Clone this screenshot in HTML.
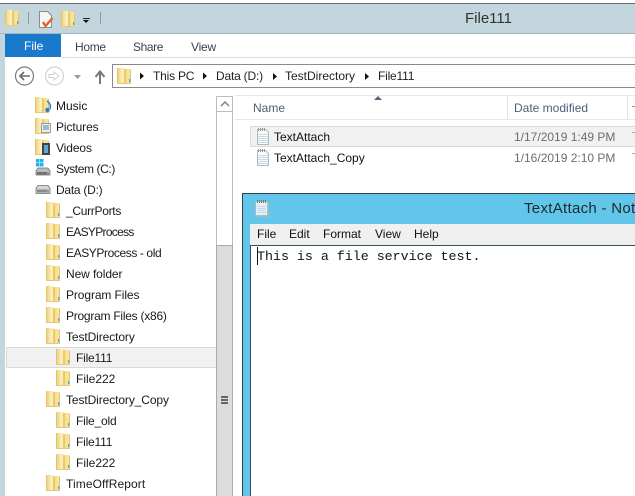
<!DOCTYPE html>
<html><head><meta charset="utf-8">
<style>
html,body{margin:0;padding:0}
body{width:635px;height:496px;overflow:hidden;position:relative;background:#fff;font-family:"Liberation Sans",sans-serif;font-size:12px;color:#1a1a1a}
.a{position:absolute}
.t{position:absolute;white-space:nowrap;line-height:16px}
svg.f{position:absolute;width:16px;height:18px}
</style></head><body>
<svg width="0" height="0" style="position:absolute"><defs>
<linearGradient id="gl" x1="0" x2="1" y1="0" y2="0"><stop offset="0" stop-color="#ecce70"/><stop offset=".7" stop-color="#fbf0c0"/><stop offset="1" stop-color="#f8e9a8"/></linearGradient>
<linearGradient id="gr" x1="0" x2="1" y1="0" y2="0"><stop offset="0" stop-color="#e8c660"/><stop offset=".35" stop-color="#f6e090"/><stop offset="1" stop-color="#f8e7a6"/></linearGradient>
<symbol id="fo" viewBox="0 0 16 18">
<path d="M0 1h7l1 1v14H0z" fill="url(#gl)"/>
<path d="M7 2h7v14H8z" fill="url(#gr)"/>
<path d="M0.500 1.500V16M13.500 3V16" stroke="#e2c46c" stroke-width="1" fill="none"/>
<path d="M0 16.500h14" stroke="#e2c878"/>
<path d="M7 2l2 1v14l-2-1z" fill="#ecca6c"/>
<rect x="12" y="12" width="1.300" height="3" fill="#55a5d8"/>
</symbol>
<symbol id="tx" viewBox="0 0 14 17">
<path d="M1.500 1.500h8l3 3v12h-11z" fill="#fbfcfd" stroke="#b4b9bd"/>
<path d="M2 6.500h10M2 8.500h10M2 10.500h10M2 12.500h10M2 14.500h10" stroke="#c6dae8"/>
<path d="M2.500 0v3M4.500 0v3M6.500 0v3M8.500 0v3" stroke="#999"/>
</symbol>
</defs></svg>

<!-- title bar -->
<div class="a" style="left:0;top:3px;width:635px;height:30px;background:#c3d6dd"></div>
<div class="a" style="left:0;top:3px;width:635px;height:1px;background:#6b6f72"></div>
<div class="a" style="left:0;top:33px;width:635px;height:1px;background:#a4b6bd"></div>
<svg class="f" style="left:5px;top:9px"><use href="#fo"/></svg>
<div class="a" style="left:28px;top:12px;width:1px;height:12px;background:#8f9da2"></div>
<svg class="a" style="left:38px;top:11px" width="17" height="17"><path d="M1.500 .5h8l4 4v12h-12z" fill="#f6f6f6" stroke="#8b8b8b"/><path d="M5 11l2.500 4 7-8" fill="none" stroke="#e0642c" stroke-width="2.400"/></svg>
<svg class="f" style="left:61px;top:10px"><use href="#fo"/></svg>
<div class="a" style="left:83px;top:18px;width:7px;height:1px;background:#222"></div>
<div class="a" style="left:83px;top:20px;width:0;height:0;border-left:3.500px solid transparent;border-right:3.500px solid transparent;border-top:3.500px solid #111"></div>
<div class="a" style="left:100px;top:12px;width:1px;height:12px;background:#8f9da2"></div>
<div class="t" style="left:465px;top:10px;font-size:15px;line-height:18px;color:#333">File111</div>

<!-- left window border -->
<div class="a" style="left:0;top:34px;width:5px;height:462px;background:#c3d6dd"></div>

<!-- ribbon -->
<div class="a" style="left:5px;top:34px;width:56px;height:23px;background:#1979ca"></div>
<div class="t" style="left:24px;top:38px;color:#fff">File</div>
<div class="t" style="left:75px;top:39px;color:#443c4c;letter-spacing:-.3px">Home</div>
<div class="t" style="left:133px;top:39px;color:#443c4c;letter-spacing:-.4px">Share</div>
<div class="t" style="left:191px;top:39px;color:#443c4c;letter-spacing:-.2px">View</div>
<div class="a" style="left:61px;top:57px;width:574px;height:1px;background:#dadbdc"></div>

<!-- nav -->
<svg class="a" style="left:14px;top:65px" width="96" height="22">
<circle cx="10.500" cy="11" r="9" fill="#fff" stroke="#7a7a7a" stroke-width="1.200"/>
<path d="M16 11H6M10 7l-4 4 4 4" fill="none" stroke="#6a6a6a" stroke-width="1.600"/>
<circle cx="40.500" cy="11" r="9" fill="#fff" stroke="#d2d2d2" stroke-width="1.200"/>
<path d="M35 9.500h5V7l5 4-5 4v-2.500h-5z" fill="none" stroke="#d2d2d2"/>
<path d="M60 10h7l-3.500 4z" fill="#9a9a9a"/>
<path d="M86 19V7M81.500 12l4.500-5.500 4.500 5.500" fill="none" stroke="#777" stroke-width="2"/>
</svg>
<div class="a" style="left:112px;top:64px;width:523px;height:22px;border:1px solid #8a8a8a;border-right:0;background:#fff"></div>
<svg class="f" style="left:117px;top:67px"><use href="#fo"/></svg>
<svg class="a" style="left:0;top:64px" width="635" height="24" fill="#111"><path d="M140 8.500l4 3.500-4 3.500zM203 8.500l4 3.500-4 3.500zM273 9l4 3.500-4 3.500zM365 9l4 3.500-4 3.500z"/></svg>
<div class="t" style="left:153px;top:68px;color:#222;letter-spacing:-.2px">This PC</div>
<div class="t" style="left:216px;top:68px;color:#222;letter-spacing:-.2px">Data (D:)</div>
<div class="t" style="left:285px;top:68px;color:#222">TestDirectory</div>
<div class="t" style="left:378px;top:68px;color:#222;letter-spacing:-.2px">File111</div>

<!-- selected tree row -->
<div class="a" style="left:6px;top:347px;width:209px;height:19px;background:#f1f1f1;border:1px solid #d9d9d9"></div>

<!-- tree icons -->
<svg class="f" style="left:35px;top:96px"><use href="#fo"/></svg>
<svg class="a" style="left:45px;top:100px" width="7" height="13"><path d="M2 1c3 2 4 5 3 8" fill="none" stroke="#2d7fc4" stroke-width="1.500"/><circle cx="2.500" cy="10" r="2.200" fill="#2d7fc4"/></svg>
<svg class="f" style="left:35px;top:117px"><use href="#fo"/></svg>
<svg class="a" style="left:41px;top:123px" width="10" height="10"><rect x=".5" y=".5" width="9" height="9" fill="#eee" stroke="#999"/><rect x="2" y="2" width="6" height="5" fill="#8fbfd0"/></svg>
<svg class="f" style="left:35px;top:138px"><use href="#fo"/></svg>
<svg class="a" style="left:42px;top:143px" width="8" height="12"><rect width="8" height="12" fill="#444"/><rect x="2" y="2" width="4" height="8" fill="#5aa7d8"/></svg>
<svg class="a" style="left:35px;top:159px" width="16" height="18"><rect x="1" y="0" width="3.500" height="3.500" fill="#20b4ee"/><rect x="5" y="0" width="3.500" height="3.500" fill="#20b4ee"/><rect x="1" y="4" width="3.500" height="3.500" fill="#20b4ee"/><rect x="5" y="4" width="3.500" height="3.500" fill="#20b4ee"/><path d="M3 9h10l2 3v4H1v-4z" fill="#b8bcbe" stroke="#6e7274" stroke-width=".8"/><rect x="2" y="13" width="12" height="2.500" fill="#6e7274"/><rect x="12" y="13.500" width="2" height="1.500" fill="#7fd050"/></svg>
<svg class="a" style="left:35px;top:185px" width="16" height="10"><path d="M3 .5h10l2 3v5H1v-5z" fill="#d4d6d8" stroke="#6e7274" stroke-width=".8"/><rect x="2" y="4.500" width="12" height="3" fill="#888c8e"/><rect x="12" y="5" width="2" height="1.500" fill="#7fd050"/></svg>

<svg class="f" style="left:46px;top:201px"><use href="#fo"/></svg>
<svg class="f" style="left:46px;top:222px"><use href="#fo"/></svg>
<svg class="f" style="left:46px;top:243px"><use href="#fo"/></svg>
<svg class="f" style="left:46px;top:264px"><use href="#fo"/></svg>
<svg class="f" style="left:46px;top:285px"><use href="#fo"/></svg>
<svg class="f" style="left:46px;top:306px"><use href="#fo"/></svg>
<svg class="f" style="left:46px;top:327px"><use href="#fo"/></svg>
<svg class="f" style="left:56px;top:348px"><use href="#fo"/></svg>
<svg class="f" style="left:56px;top:369px"><use href="#fo"/></svg>
<svg class="f" style="left:46px;top:390px"><use href="#fo"/></svg>
<svg class="f" style="left:56px;top:411px"><use href="#fo"/></svg>
<svg class="f" style="left:56px;top:432px"><use href="#fo"/></svg>
<svg class="f" style="left:56px;top:453px"><use href="#fo"/></svg>
<svg class="f" style="left:46px;top:474px"><use href="#fo"/></svg>

<!-- tree text -->
<div class="t" style="left:56px;top:98px">Music</div>
<div class="t" style="left:56px;top:119px;letter-spacing:-.1px">Pictures</div>
<div class="t" style="left:56px;top:140px;letter-spacing:-.1px">Videos</div>
<div class="t" style="left:56px;top:161px;letter-spacing:-.4px">System (C:)</div>
<div class="t" style="left:56px;top:182px;letter-spacing:-.25px">Data (D:)</div>
<div class="t" style="left:66px;top:203px;letter-spacing:-.3px">_CurrPorts</div>
<div class="t" style="left:66px;top:224px;letter-spacing:-.7px">EASYProcess</div>
<div class="t" style="left:66px;top:245px;letter-spacing:-.4px">EASYProcess - old</div>
<div class="t" style="left:66px;top:266px;letter-spacing:-.1px">New folder</div>
<div class="t" style="left:66px;top:287px;letter-spacing:-.1px">Program Files</div>
<div class="t" style="left:66px;top:308px;letter-spacing:-.25px">Program Files (x86)</div>
<div class="t" style="left:66px;top:329px;letter-spacing:-.1px">TestDirectory</div>
<div class="t" style="left:76px;top:350px;letter-spacing:-.2px">File111</div>
<div class="t" style="left:76px;top:371px">File222</div>
<div class="t" style="left:66px;top:392px;letter-spacing:-.1px">TestDirectory_Copy</div>
<div class="t" style="left:76px;top:413px;letter-spacing:-.2px">File_old</div>
<div class="t" style="left:76px;top:434px;letter-spacing:-.2px">File111</div>
<div class="t" style="left:76px;top:455px">File222</div>
<div class="t" style="left:66px;top:476px;letter-spacing:.1px">TimeOffReport</div>

<!-- tree scrollbar -->
<div class="a" style="left:216px;top:96px;width:17px;height:400px;box-sizing:border-box;border-left:1px solid #bdbdbd;border-right:1px solid #bdbdbd;background:#fff"></div>
<div class="a" style="left:216px;top:111px;width:17px;height:1px;background:#bdbdbd"></div>
<div class="a" style="left:216px;top:96px;width:17px;height:1px;background:#bdbdbd"></div>
<svg class="a" style="left:220px;top:100px" width="10" height="8"><path d="M1 6l4-4 4 4" fill="none" stroke="#777" stroke-width="1.300"/></svg>
<div class="a" style="left:216px;top:245px;width:17px;height:251px;box-sizing:border-box;background:#dcdcdc;border:1px solid #a9a9a9;border-bottom:0"></div>
<div class="a" style="left:221px;top:396px;width:7px;height:2px;background:#666"></div>
<div class="a" style="left:221px;top:399px;width:7px;height:2px;background:#666"></div>
<div class="a" style="left:221px;top:402px;width:7px;height:2px;background:#666"></div>

<!-- column headers -->
<div class="a" style="left:235px;top:95px;width:400px;height:1px;background:#e6e6e6"></div>
<div class="a" style="left:235px;top:119px;width:400px;height:1px;background:#e6e6e6"></div>
<div class="a" style="left:507px;top:96px;width:1px;height:23px;background:#e3e3e3"></div>
<div class="a" style="left:627px;top:96px;width:1px;height:23px;background:#e3e3e3"></div>
<div class="a" style="left:374px;top:96px;width:0;height:0;border-left:4px solid transparent;border-right:4px solid transparent;border-bottom:4px solid #55667a"></div>
<div class="t" style="left:253px;top:100px;color:#4c607a">Name</div>
<div class="t" style="left:514px;top:100px;color:#4c607a">Date modified</div>

<!-- files -->
<div class="a" style="left:250px;top:126px;width:385px;height:21px;box-sizing:border-box;background:#f1f1f1;border:1px solid #d9d9d9;border-right:0"></div>
<svg class="a" style="left:256px;top:128px" width="14" height="17"><use href="#tx"/></svg>
<svg class="a" style="left:256px;top:149px" width="14" height="17"><use href="#tx"/></svg>
<div class="t" style="left:274px;top:129px;color:#111">TextAttach</div>
<div class="t" style="left:274px;top:150px;color:#111">TextAttach_Copy</div>
<div class="t" style="left:514px;top:129px;color:#6d6d6d">1/17/2019 1:49 PM</div>
<div class="t" style="left:514px;top:150px;color:#6d6d6d">1/16/2019 2:10 PM</div>
<div class="a" style="left:632px;top:132px;width:3px;height:1px;background:#c8a878"></div>
<div class="a" style="left:632px;top:153px;width:3px;height:1px;background:#c8a878"></div>
<div class="a" style="left:632px;top:106px;width:3px;height:1px;background:#8a98aa"></div>

<!-- notepad -->
<div class="a" style="left:242px;top:193px;width:393px;height:303px;background:#62c5ea;border:1px solid #33404a;border-right:0;border-bottom:0;box-sizing:border-box"></div>
<svg class="a" style="left:255px;top:200px" width="14" height="17"><path d="M.5 1.500h12v14H.5z" fill="#e4eff6" stroke="#a9bac6"/><path d="M13 3v14H2" fill="none" stroke="#c9b9a0"/><path d="M2.500 0v3M4.500 0v3M6.500 0v3M8.500 0v3M10.500 0v3" stroke="#777"/><path d="M2 6.500h9M2 8.500h9M2 10.500h9M2 12.500h9" stroke="#c3d8e6"/></svg>
<div class="a" style="left:524px;top:199px;width:111px;height:20px;overflow:hidden"><div class="t" style="left:0;top:0;font-size:15px;line-height:20px;color:#1c2a30;letter-spacing:.3px">TextAttach - Notepad</div></div>
<div class="a" style="left:250px;top:224px;width:385px;height:21px;background:#f0f0f0"></div>
<div class="t" style="left:257px;top:226px;color:#111">File</div>
<div class="t" style="left:289px;top:226px;color:#111">Edit</div>
<div class="t" style="left:323px;top:226px;color:#111">Format</div>
<div class="t" style="left:375px;top:226px;color:#111">View</div>
<div class="t" style="left:414px;top:226px;color:#111">Help</div>
<div class="a" style="left:250px;top:245px;width:385px;height:251px;background:#fff;border-top:1px solid #33505f;border-left:1px solid #33505f;box-sizing:border-box"></div>
<div class="t" style="left:257px;top:249px;font-family:'Liberation Mono',monospace;font-size:13.300px;color:#111">This is a file service test.</div>
<div class="a" style="left:257px;top:247px;width:1px;height:18px;background:#111"></div>
</body></html>
